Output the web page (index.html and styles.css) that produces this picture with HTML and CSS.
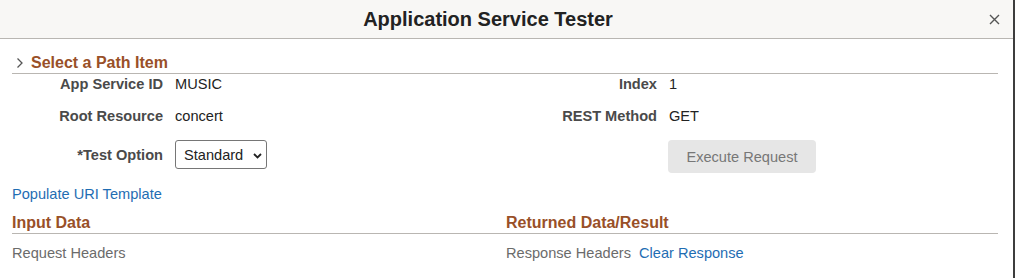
FILE: index.html
```html
<!DOCTYPE html>
<html lang="en">
<head>
    <meta charset="UTF-8">
    <meta name="viewport" content="width=device-width, initial-scale=1.0">
    <title>Application Service Tester</title>
    <link rel="stylesheet" href="styles.css">
</head>
<body>
    <div class="dialog">
        <div class="dialog-header">
            <h1>Application Service Tester</h1>
            <button class="btn-close" title="Close">
                <svg width="11" height="11" viewBox="0 0 11 11"><path d="M1 1 L10 10 M10 1 L1 10" stroke="#555" stroke-width="1.4" fill="none"/></svg>
            </button>
        </div>

        <div class="dialog-body">
            <!-- Path item section -->
            <div class="section-title">
                <svg class="chevron" width="8" height="12" viewBox="0 0 8 12"><path d="M1.5 1.5 L6 6 L1.5 10.5" stroke="#555" stroke-width="1.3" fill="none"/></svg>
                <span>Select a Path Item</span>
            </div>

            <div class="form-grid">
                <div class="field row-1">
                    <label>App Service ID</label>
                    <span class="value">MUSIC</span>
                </div>
                <div class="field row-1">
                    <label>Index</label>
                    <span class="value">1</span>
                </div>
                <div class="field row-2">
                    <label>Root Resource</label>
                    <span class="value">concert</span>
                </div>
                <div class="field row-2">
                    <label>REST Method</label>
                    <span class="value">GET</span>
                </div>
                <div class="field row-3">
                    <label>*Test Option</label>
                    <select class="select">
                        <option>Standard</option>
                    </select>
                </div>
                <div class="field row-3">
                    <label></label>
                    <button class="btn btn-execute" disabled>Execute Request</button>
                </div>
            </div>

            <a href="#" class="link populate">Populate URI Template</a>

            <div class="data-grid">
                <div class="data-col">
                    <h2>Input Data</h2>
                    <div class="data-line">
                        <span class="muted">Request Headers</span>
                    </div>
                </div>
                <div class="data-col">
                    <h2>Returned Data/Result</h2>
                    <div class="data-line">
                        <span class="muted">Response Headers</span>
                        <a href="#" class="link">Clear Response</a>
                    </div>
                </div>
            </div>
        </div>
    </div>
</body>
</html>
```

FILE: styles.css
```css
body {
    margin: 0;
    font-family: "Liberation Sans", Arial, sans-serif;
    font-size: 14.6px;
    color: #222;
    background-color: #fff;
}

.dialog {
    height: 278px;
    border-right: 2px solid #3d3d3d;
    overflow: hidden;
}

.dialog-header {
    height: 38px;
    background-color: #f8f7f5;
    border-bottom: 1px solid #b9b6b2;
    display: flex;
    align-items: center;
    justify-content: center;
    position: relative;
}

.dialog-header h1 {
    margin: 0;
    font-size: 20px;
    font-weight: bold;
    color: #222;
    padding-right: 37px;
}

.btn-close {
    position: absolute;
    right: 13px;
    top: 14px;
    border: none;
    background: none;
    padding: 0;
    width: 11px;
    height: 11px;
    cursor: pointer;
    display: flex;
}

.dialog-body {
    padding: 0 15px 0 12px;
}

.section-title {
    margin-top: 13px;
    height: 21px;
    border-bottom: 1px solid #b9b6b2;
    display: flex;
    align-items: center;
    color: #995028;
    font-size: 16px;
    font-weight: bold;
}

.chevron {
    margin-left: 4px;
    margin-right: 7px;
}

.form-grid {
    display: grid;
    grid-template-columns: 494px 1fr;
}

.field {
    display: flex;
    align-items: center;
}

.field label {
    width: 151px;
    text-align: right;
    font-weight: bold;
    color: #4a4a4a;
    margin-right: 12px;
}

.row-1 {
    height: 18px;
    margin-top: 1px;
}

.row-2 {
    height: 18px;
    margin-top: 14px;
}

.row-3 {
    margin-top: 15px;
    height: 33px;
    align-items: flex-start;
}

.row-3 label {
    line-height: 31px;
}

.select {
    appearance: none;
    -webkit-appearance: none;
    width: 92px;
    height: 29px;
    border: 1px solid #767676;
    border-radius: 3px;
    background-color: #fff;
    background-image: url("data:image/svg+xml,%3Csvg xmlns='http://www.w3.org/2000/svg' width='9' height='6' viewBox='0 0 9 6'%3E%3Cpath d='M1 1 L4.5 4.5 L8 1' stroke='%23222' stroke-width='1.8' fill='none'/%3E%3C/svg%3E");
    background-repeat: no-repeat;
    background-position: 77px 12px;
    font-family: "Liberation Sans", Arial, sans-serif;
    font-size: 14.6px;
    color: #222;
    padding: 0 0 0 8px;
}

.btn {
    font-family: "Liberation Sans", Arial, sans-serif;
    font-size: 14.6px;
    border: none;
    border-radius: 4px;
    cursor: pointer;
}

.btn-execute {
    width: 148px;
    height: 33px;
    margin-left: -1px;
    background-color: #e6e6e6;
    color: #777;
}

.link {
    color: #1f6db3;
    text-decoration: none;
}

.populate {
    display: block;
    margin-top: 12px;
    line-height: 18px;
}

.data-grid {
    display: grid;
    grid-template-columns: 494px 1fr;
}

.data-grid h2 {
    margin: 9px 0 0 0;
    font-size: 16px;
    font-weight: bold;
    color: #995028;
    line-height: 21px;
    border-bottom: 1px solid #b9b6b2;
}

.data-line {
    margin-top: 10px;
    line-height: 18px;
}

.muted {
    color: #6b6b6b;
    margin-right: 4px;
}
```
